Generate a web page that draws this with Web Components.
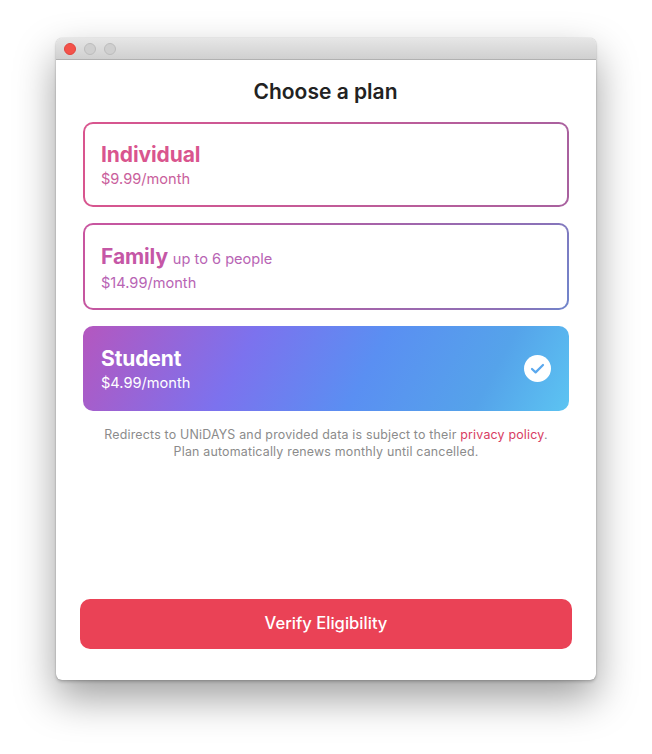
<!DOCTYPE html>
<html>
<head>
<meta charset="utf-8">
<title>Choose a plan</title>
<style>
  html, body { margin: 0; background: #fff; }
  body { padding: 38px 56px 0; height: 754px; box-sizing: border-box; overflow: hidden; font-family: Inter, "Liberation Sans", sans-serif; }
</style>
</head>
<body>

<app-window>
  <h-title>Choose a plan</h-title>
  <plan-list>
    <plan-card name="Individual" price="$9.99/month" kind="individual"></plan-card>
    <plan-card name="Family" note="up to 6 people" price="$14.99/month" kind="family"></plan-card>
    <plan-card name="Student" price="$4.99/month" kind="student" selected></plan-card>
  </plan-list>
  <plan-note>
    Redirects to UNiDAYS and provided data is subject to their <a href="#" style="color:#d83c62;text-decoration:none">privacy policy</a>.<br>
    Plan automatically renews monthly until cancelled.
  </plan-note>
  <verify-button>Verify Eligibility</verify-button>
</app-window>

<script>
class AppWindow extends HTMLElement {
  constructor() {
    super();
    this.attachShadow({ mode: 'open' });
    this.shadowRoot.innerHTML = `
      <style>
        :host {
          display: flex;
          flex-direction: column;
          width: 540px;
          height: 642px;
          border-radius: 6px;
          background: #fff;
          box-shadow: 0 0 1px rgba(0,0,0,.4), 0 2px 3px rgba(0,0,0,.18), 0 18px 40px rgba(0,0,0,.38);
          overflow: hidden;
        }
        .bar {
          flex: none;
          height: 21px;
          display: flex;
          align-items: center;
          gap: 8px;
          padding: 0 8px;
          background: linear-gradient(#e6e6e6, #d0d0d0);
          border-bottom: 1px solid #b1b1b1;
        }
        .dot { width: 12px; height: 12px; box-sizing: border-box; border-radius: 50%; background: #cfcfcf; border: 1px solid #bcbcbc; }
        .dot.close { background: #f4524a; border-color: #e0443e; }
        .body { flex: 1; display: flex; flex-direction: column; min-height: 0; padding: 0 24px 31px; }
      </style>
      <div class="bar"><span class="dot close"></span><span class="dot"></span><span class="dot"></span></div>
      <div class="body"><slot></slot></div>`;
  }
}

class HTitle extends HTMLElement {
  constructor() {
    super();
    this.attachShadow({ mode: 'open' });
    this.shadowRoot.innerHTML = `
      <style>
        :host { display: block; margin-top: 20px; padding-right: 1px; height: 24px; line-height: 24px; text-align: center; font-size: 21px; font-weight: 600; color: #222; }
      </style>
      <slot></slot>`;
  }
}

class PlanList extends HTMLElement {
  constructor() {
    super();
    this.attachShadow({ mode: 'open' });
    this.shadowRoot.innerHTML = `
      <style>
        :host { display: flex; flex-direction: column; gap: 16px; margin: 18px 3px 0; }
      </style>
      <slot></slot>`;
  }
}

const PLAN_GRADIENTS = {
  individual: 'linear-gradient(100deg, #d9558e 0%, #c65a97 45%, #a8619f 100%)',
  family: 'linear-gradient(110deg, #c9559f 0%, #a862a8 55%, #8a72b8 90%, #6f86cc 100%)',
  student: 'linear-gradient(118deg, #b457bf 0%, #7c72ee 33%, #5a8ff2 58%, #55a3ea 82%, #5cc4f2 100%)'
};

// name colour, small text colour
const PLAN_TINTS = {
  individual: ['#d9558e', '#c9609c'],
  family: ['#c557a6', '#b864b4'],
  student: ['#fff', '#fff']
};

class PlanCard extends HTMLElement {
  constructor() {
    super();
    this.attachShadow({ mode: 'open' });
  }

  connectedCallback() {
    const kind = this.getAttribute('kind');
    const name = this.getAttribute('name');
    const note = this.getAttribute('note');
    const price = this.getAttribute('price');
    const selected = this.hasAttribute('selected');
    const grad = PLAN_GRADIENTS[kind];
    const [tint, small] = PLAN_TINTS[kind];
    this.shadowRoot.innerHTML = `
      <style>
        :host {
          display: flex;
          align-items: center;
          justify-content: space-between;
          box-sizing: border-box;
          height: ${kind === 'family' ? 87 : 85}px;
          padding: 0 16px;
          border: 2px solid transparent;
          border-radius: 10px;
          background: ${selected ? grad + ' border-box' : 'linear-gradient(#fff,#fff) padding-box, ' + grad + ' border-box'};
          color: ${small};
        }
        .text { padding-top: ${kind === 'family' ? 2 : 0}px; }
        .name { font-size: 21px; font-weight: 700; line-height: 26px; color: ${tint}; letter-spacing: -.1px; }
        .note { font-size: 14.6px; font-weight: 400; color: ${small}; letter-spacing: 0; }
        .price { font-size: 14.6px; line-height: 18px; margin-top: 2px; }
        svg { display: block; width: 27px; height: 27px; }
      </style>
      <div class="text">
        <div class="name">${name}${note ? ` <span class="note">${note}</span>` : ''}</div>
        <div class="price">${price}</div>
      </div>
      ${selected ? `<svg viewBox="0 0 27 27"><circle cx="13.5" cy="13.5" r="13.5" fill="#fff"/><path d="M8 14l3.6 3.4 7.4-7.4" fill="none" stroke="#5aa8ee" stroke-width="2.2" stroke-linecap="round" stroke-linejoin="round"/></svg>` : ''}`;
  }
}

class PlanNote extends HTMLElement {
  constructor() {
    super();
    this.attachShadow({ mode: 'open' });
    this.shadowRoot.innerHTML = `
      <style>
        :host { display: block; margin-top: 15px; text-align: center; font-size: 12.4px; line-height: 17px; letter-spacing: .2px; color: #8b8b8b; }
      </style>
      <slot></slot>`;
  }
}

class VerifyButton extends HTMLElement {
  constructor() {
    super();
    this.attachShadow({ mode: 'open' });
    this.shadowRoot.innerHTML = `
      <style>
        :host {
          display: flex;
          align-items: center;
          justify-content: center;
          margin-top: auto;
          height: 50px;
          padding-bottom: 2px;
          box-sizing: border-box;
          border-radius: 10px;
          background: #ea4256;
          color: #fff;
          font-size: 16.6px;
          font-weight: 500;
        }
      </style>
      <slot></slot>`;
  }
}

customElements.define('app-window', AppWindow);
customElements.define('h-title', HTitle);
customElements.define('plan-list', PlanList);
customElements.define('plan-card', PlanCard);
customElements.define('plan-note', PlanNote);
customElements.define('verify-button', VerifyButton);
</script>
</body>
</html>
